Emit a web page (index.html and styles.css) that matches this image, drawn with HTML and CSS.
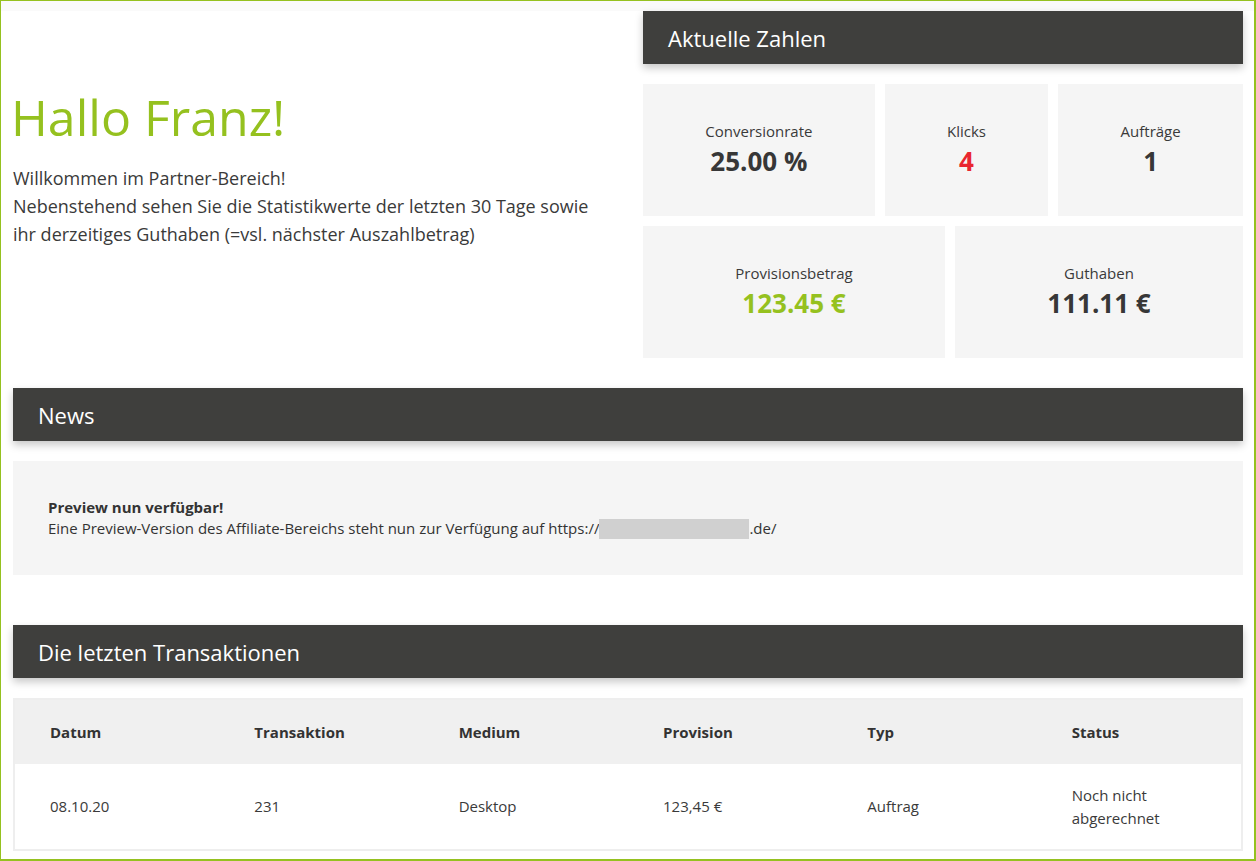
FILE: index.html
```html
<!DOCTYPE html>
<html lang="de">
<head>
<meta charset="utf-8">
<title>Partner-Bereich</title>
<link rel="stylesheet" href="styles.css">
</head>
<body>
<div class="frame">
  <section class="top">
    <div class="welcome">
      <h1 class="hello">Hallo Franz!</h1>
      <p class="intro">Willkommen im Partner-Bereich!<br>Nebenstehend sehen Sie die Statistikwerte der letzten 30 Tage sowie ihr derzeitiges Guthaben (=vsl. nächster Auszahlbetrag)</p>
    </div>
    <div class="figures">
      <h2 class="bar">Aktuelle Zahlen</h2>
      <div class="stat-row">
        <div class="stat"><div class="stat-label">Conversionrate</div><div class="stat-value">25.00 %</div></div>
        <div class="stat"><div class="stat-label">Klicks</div><div class="stat-value red">4</div></div>
        <div class="stat"><div class="stat-label">Aufträge</div><div class="stat-value">1</div></div>
      </div>
      <div class="stat-row">
        <div class="stat"><div class="stat-label">Provisionsbetrag</div><div class="stat-value green">123.45 €</div></div>
        <div class="stat"><div class="stat-label">Guthaben</div><div class="stat-value">111.11 €</div></div>
      </div>
    </div>
  </section>

  <h2 class="bar news-bar">News</h2>
  <div class="news">
    <strong class="news-title">Preview nun verfügbar!</strong>
    <div class="news-text">Eine Preview-Version des Affiliate-Bereichs steht nun zur Verfügung auf https://<span class="redact"></span>.de/</div>
  </div>

  <h2 class="bar trans-bar">Die letzten Transaktionen</h2>
  <table class="trans">
    <thead>
      <tr><th>Datum</th><th>Transaktion</th><th>Medium</th><th>Provision</th><th>Typ</th><th>Status</th></tr>
    </thead>
    <tbody>
      <tr><td>08.10.20</td><td>231</td><td>Desktop</td><td>123,45 €</td><td>Auftrag</td><td>Noch nicht abgerechnet</td></tr>
    </tbody>
  </table>
</div>
</body>
</html>
```
FILE: styles.css
```css
* { box-sizing: border-box; }
html, body { margin: 0; padding: 0; }
body {
  font-family: "Open Sans", "Liberation Sans", sans-serif;
  color: #333333;
  background: #ffffff;
}
.frame {
  width: 1256px;
  height: 861px;
  border-style: solid;
  border-color: #95c11f;
  border-width: 1px 2px 2px 1px;
  padding: 10px 11px 0 12px;
  background: linear-gradient(#fafafa 0, #fafafa 10px, #ffffff 10px);
  overflow: hidden;
}
.top {
  display: grid;
  grid-template-columns: 600px 600px;
  column-gap: 30px;
}
.welcome { padding-top: 76px; }
.hello {
  margin: 0 0 0 -2px;
  font-size: 50px;
  line-height: 60px;
  font-weight: 400;
  color: #95c11f;
}
.intro {
  margin: 17px 0 0;
  font-size: 18px;
  line-height: 28px;
  color: #3a3a3a;
}
.bar {
  margin: 0;
  height: 53px;
  display: flex;
  align-items: center;
  padding: 0 25px;
  background: #3f3f3d;
  color: #ffffff;
  font-size: 22px;
  font-weight: 400;
  box-shadow: 0 4px 8px rgba(0, 0, 0, 0.22);
}
.figures .bar { margin-bottom: 20px; }
.stat-row {
  display: flex;
  gap: 10px;
  margin-bottom: 10px;
}
.stat {
  flex: 1 1 auto;
  background: #f5f5f5;
  padding: 36px 0;
  text-align: center;
}
.stat-label {
  font-size: 15px;
  line-height: 22px;
  color: #3a3a3a;
}
.stat-value {
  font-size: 26px;
  line-height: 38px;
  font-weight: 700;
  color: #373737;
}
.stat-value.red { color: #e9262f; }
.stat-value.green { color: #95c11f; }
.news-bar { margin-top: 20px; }
.news {
  margin-top: 20px;
  background: #f5f5f5;
  padding: 36px 35px;
  font-size: 15px;
  line-height: 21px;
  color: #333333;
}
.news-title { display: block; font-weight: 700; }
.redact {
  display: inline-block;
  width: 150px;
  height: 20px;
  vertical-align: -5px;
  background: #d0d0d0;
}
.trans-bar { margin-top: 50px; }
.trans {
  margin-top: 20px;
  width: 100%;
  table-layout: fixed;
  border-collapse: separate;
  border-spacing: 0;
  border: 2px solid #eeeeee;
  font-size: 15px;
  line-height: 23px;
}
.trans th {
  background: #f0f0f0;
  height: 64px;
  text-align: left;
  font-weight: 700;
  padding: 0 35px;
  color: #333333;
}
.trans td {
  height: 85px;
  padding: 0 35px;
  color: #3a3a3a;
  background: #ffffff;
}
```
